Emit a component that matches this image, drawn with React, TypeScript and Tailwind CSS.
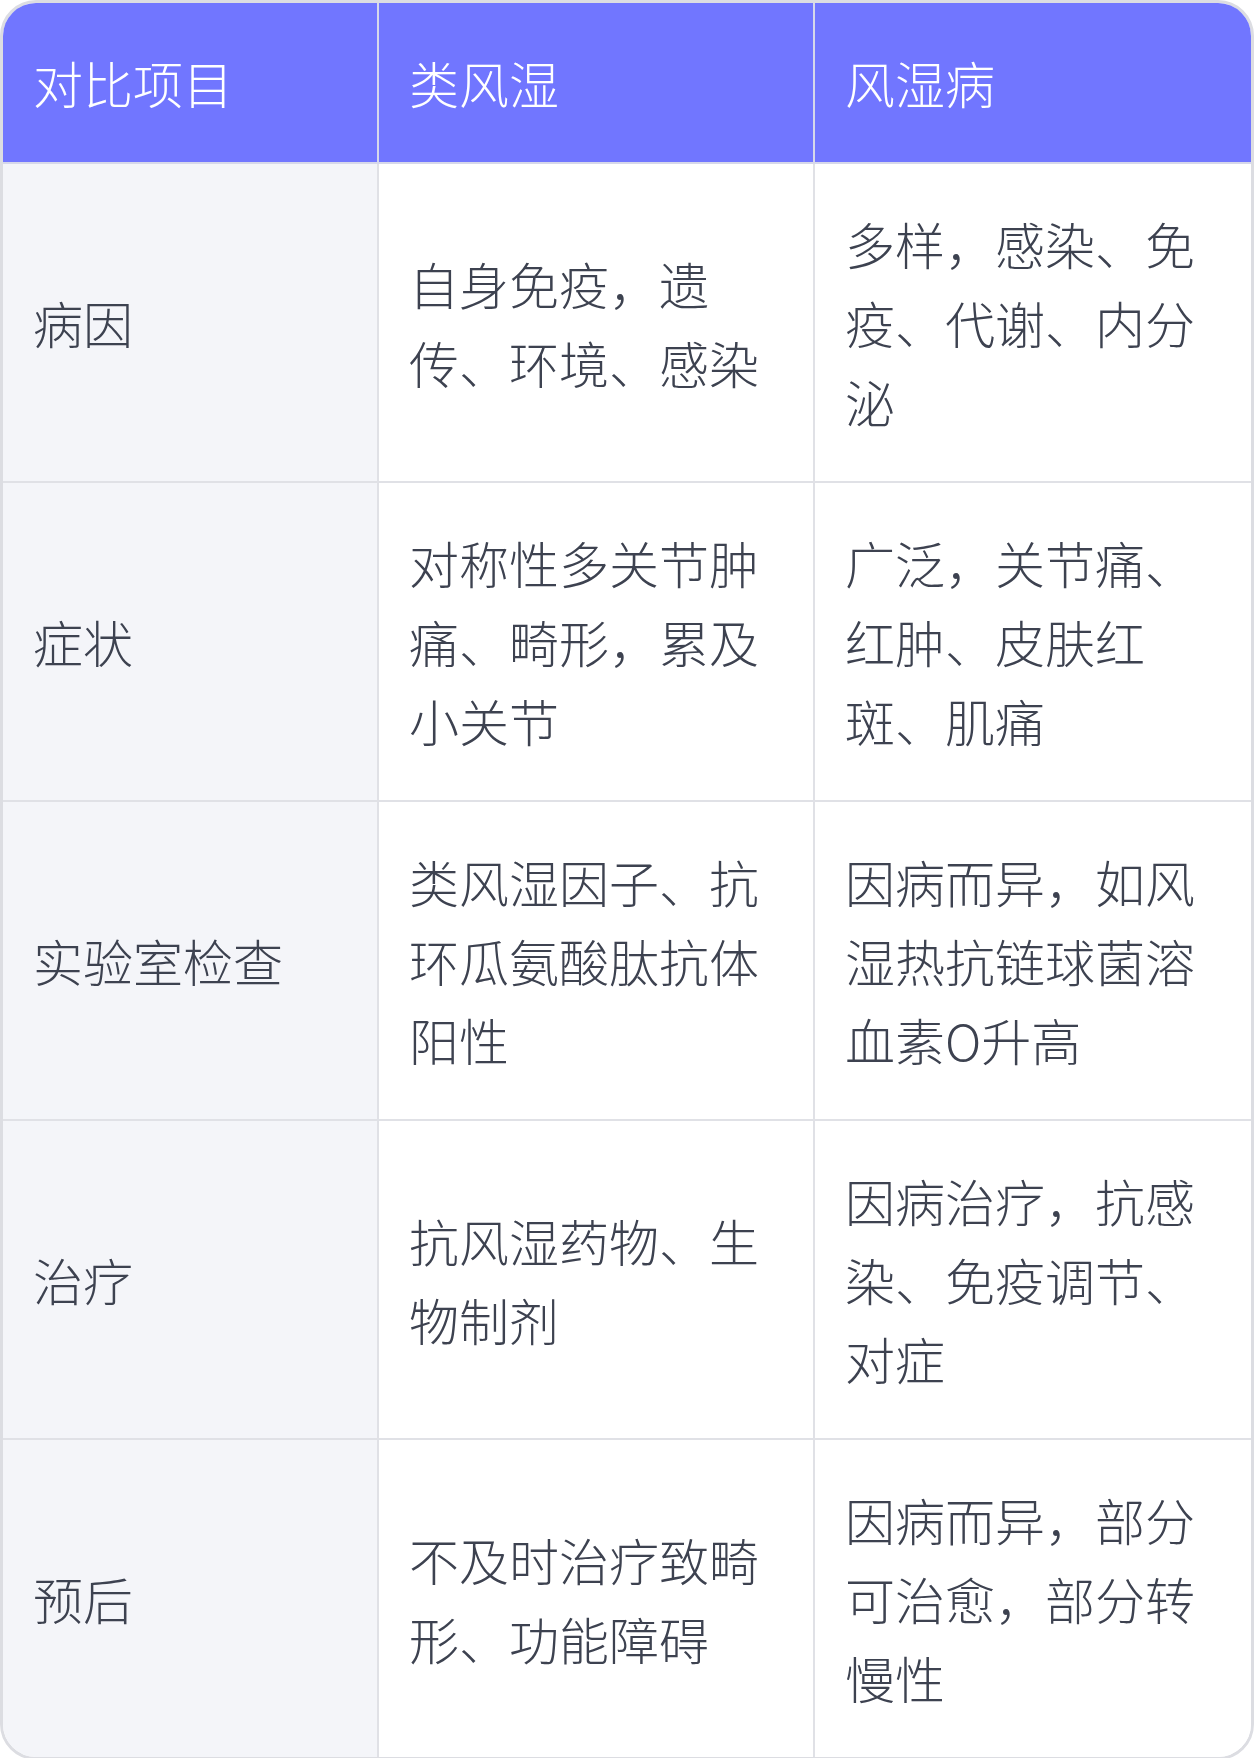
const rows: [string, string, string][] = [
  ["病因", "自身免疫，遗传、环境、感染", "多样，感染、免疫、代谢、内分泌"],
  ["症状", "对称性多关节肿痛、畸形，累及小关节", "广泛，关节痛、红肿、皮肤红斑、肌痛"],
  ["实验室检查", "类风湿因子、抗环瓜氨酸肽抗体阳性", "因病而异，如风湿热抗链球菌溶血素O升高"],
  ["治疗", "抗风湿药物、生物制剂", "因病治疗，抗感染、免疫调节、对症"],
  ["预后", "不及时治疗致畸形、功能障碍", "因病而异，部分可治愈，部分转慢性"],
];

export default function App() {
  return (
    <div className="w-[1254px] bg-white" style={{ fontFamily: '"Noto Sans CJK SC", "Noto Sans", sans-serif' }}>
      <div className="rounded-[36px] border-[3px] border-[#dcdde2] overflow-hidden">
        <table className="w-full table-fixed border-separate border-spacing-0 text-[50px] leading-[79px] font-light">
          <colgroup>
            <col className="w-[376px]" />
            <col className="w-[436px]" />
            <col />
          </colgroup>
          <thead>
            <tr className="bg-[#7176ff] text-white">
              <th className="px-[30px] py-10 text-left font-light border-r-2 border-b-2 border-[#d6d8ea]">对比项目</th>
              <th className="px-[30px] py-10 text-left font-light border-r-2 border-b-2 border-[#d6d8ea]">类风湿</th>
              <th className="px-[30px] py-10 text-left font-light border-b-2 border-[#d6d8ea]">风湿病</th>
            </tr>
          </thead>
          <tbody className="text-[#3d4250]">
            {rows.map((r, i) => {
              const last = i === rows.length - 1;
              return (
                <tr key={r[0]}>
                  <td className={`px-[30px] py-10 bg-[#f4f5f9] border-r-2 border-[#e0e1e6] ${last ? "" : "border-b-2"}`}>{r[0]}</td>
                  <td className={`px-[30px] py-10 bg-white border-r-2 border-[#e0e1e6] ${last ? "" : "border-b-2"}`}>{r[1]}</td>
                  <td className={`px-[30px] py-10 bg-white border-[#e0e1e6] ${last ? "" : "border-b-2"}`}>{r[2]}</td>
                </tr>
              );
            })}
          </tbody>
        </table>
      </div>
    </div>
  );
}
